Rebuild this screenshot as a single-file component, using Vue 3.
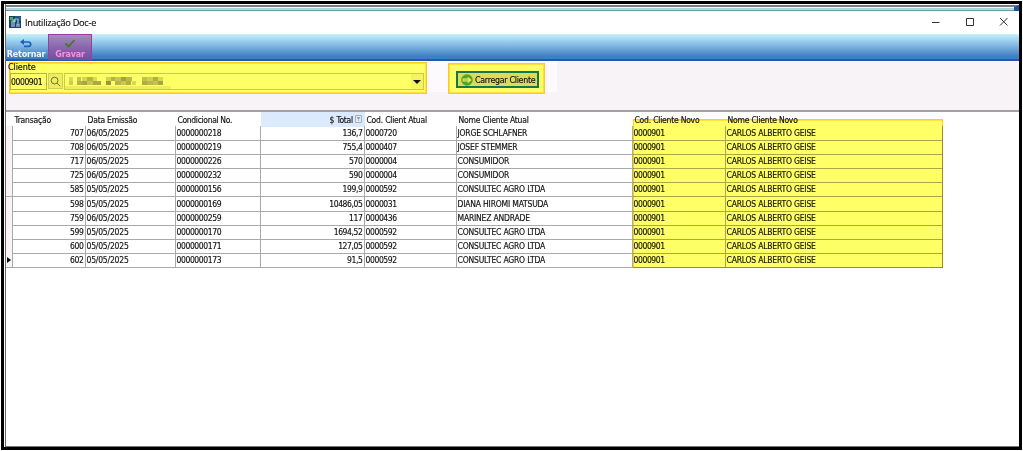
<template>
  <div class="frame">
    <div class="window">
      <div class="backdrop"></div>
      <header class="titlebar">
        <svg class="app-icon" viewBox="0 0 12 12">
          <rect width="12" height="12" fill="#173f69" />
          <path d="M1 4V1h3v2h2v3H4V4z" fill="#39b54a" />
          <path d="M3 11V5h2v6M6 6V3h3v4M8 11V8h2v3" fill="none" stroke="#a9cce0" stroke-width="1.2" />
          <path d="M6 1h5v4" fill="none" stroke="#2777a8" />
        </svg>
        <span class="title">Inutilização Doc-e</span>
        <svg class="controls" viewBox="0 0 78 10">
          <path d="M2 5.5h7.5M36.5 1.5h7v7h-7zM70 1l7.5 7.5M77.5 1L70 8.5" />
        </svg>
      </header>

      <nav class="toolbar">
        <button class="tool">
          <svg viewBox="0 0 12 9">
            <path d="M2 3h6.5a2.2 2.2 0 0 1 0 4.4H4" fill="none" stroke="#1763bd" stroke-width="1.7" />
            <path d="M0 3L4 0v6z" fill="#1763bd" />
          </svg>
          <span>Retornar</span>
        </button>
        <button class="tool tool--active">
          <svg viewBox="0 0 12 9">
            <path d="M1.5 4.5l3 3L10.5 1" fill="none" stroke="#3f7d22" stroke-width="1.8" />
          </svg>
          <span>Gravar</span>
        </button>
      </nav>

      <section class="filter">
        <div class="filter__light">
          <div class="client">
            <label class="client__label">Cliente</label>
            <div class="client__row">
              <span class="client__code">0000901</span>
              <button class="client__search">
                <svg viewBox="0 0 12 12">
                  <circle cx="5" cy="5" r="3.7" />
                  <path d="M7.8 7.8L11.2 11.2" />
                </svg>
              </button>
              <div class="client__name">
                <svg class="mosaic" viewBox="0 0 106 14">
                  <rect y="11" width="106" height="3" fill="#eded5d" />
                  <rect
                    v-for="(b, i) in blocks"
                    :key="i"
                    :x="b[0]"
                    :y="b[1]"
                    :width="b[2]"
                    height="4"
                    :fill="b[3]"
                  />
                </svg>
                <span class="client__drop"><i></i></span>
              </div>
            </div>
          </div>
          <div class="load">
            <button class="load__button">
              <svg viewBox="0 0 12 12">
                <circle cx="6" cy="6" r="5.8" fill="#55a51c" />
                <path d="M1.7 4.6h5V2.7L10.6 6 6.7 9.3V7.4h-5z" fill="#e5ed72" />
                <path d="M2.5 6h5" stroke="#8fbf3c" />
              </svg>
              <span>Carregar Cliente</span>
            </button>
          </div>
        </div>
      </section>

      <main class="grid">
        <div class="row row--head">
          <div class="cell cell--mark"></div>
          <div v-for="c in columns" :key="c.key" :class="['cell', `cell--${c.key}`]">
            <span>{{ c.label }}</span>
            <svg v-if="c.key === 'total'" class="funnel" viewBox="0 0 7 8">
              <path d="M.5.5h6v7h-6z" fill="#e8eef5" stroke="#a4afbc" />
              <path d="M2 2.5h3L3.5 4z M3.5 3.5V6" fill="#8390a0" stroke="#8390a0" stroke-width=".6" />
            </svg>
          </div>
        </div>
        <div v-for="(r, i) in rows" :key="r[0]" class="row">
          <div class="cell cell--mark"><i v-if="i === rows.length - 1"></i></div>
          <div v-for="(c, j) in columns" :key="c.key" :class="['cell', `cell--${c.key}`]">
            <span>{{ r[j] }}</span>
          </div>
        </div>
        <div class="highlight"></div>
      </main>
    </div>
  </div>
</template>

<script setup>
const columns = [
  { key: 'trans', label: 'Transação' },
  { key: 'date', label: 'Data Emissão' },
  { key: 'cond', label: 'Condicional No.' },
  { key: 'total', label: '$ Total' },
  { key: 'code', label: 'Cod. Client Atual' },
  { key: 'name', label: 'Nome Cliente Atual' },
  { key: 'newcode', label: 'Cod. Cliente Novo' },
  { key: 'newname', label: 'Nome Cliente Novo' }
];

const rows = [
  ['707', '06/05/2025', '0000000218', '136,7', '0000720', 'JORGE SCHLAFNER'],
  ['708', '06/05/2025', '0000000219', '755,4', '0000407', 'JOSEF STEMMER'],
  ['717', '06/05/2025', '0000000226', '570', '0000004', 'CONSUMIDOR'],
  ['725', '06/05/2025', '0000000232', '590', '0000004', 'CONSUMIDOR'],
  ['585', '05/05/2025', '0000000156', '199,9', '0000592', 'CONSULTEC AGRO LTDA'],
  ['598', '05/05/2025', '0000000169', '10486,05', '0000031', 'DIANA HIROMI MATSUDA'],
  ['759', '06/05/2025', '0000000259', '117', '0000436', 'MARINEZ ANDRADE'],
  ['599', '05/05/2025', '0000000170', '1694,52', '0000592', 'CONSULTEC AGRO LTDA'],
  ['600', '05/05/2025', '0000000171', '127,05', '0000592', 'CONSULTEC AGRO LTDA'],
  ['602', '05/05/2025', '0000000173', '91,5', '0000592', 'CONSULTEC AGRO LTDA']
].map((r) => [...r, '0000901', 'CARLOS ALBERTO GEISE']);

// censored client name: x, y, width, colour
const blocks = [
  [4, 2, 4, '#d9d955'], [4, 6, 4, '#cccc50'], [12, 2, 4, '#c5c54e'], [12, 6, 5, '#b3b347'],
  [17, 2, 5, '#d6d654'], [17, 6, 5, '#a6a642'], [22, 2, 6, '#b6b648'], [22, 6, 6, '#c8c84f'],
  [28, 2, 4, '#dada56'], [28, 6, 8, '#a9a943'], [41, 2, 5, '#d2d253'], [41, 6, 5, '#98983d'],
  [46, 2, 4, '#b3b347'], [50, 2, 6, '#c7c74e'], [50, 6, 6, '#b5b548'], [56, 2, 5, '#a2a240'],
  [56, 6, 5, '#c7c74e'], [61, 2, 6, '#bbbb4a'], [61, 6, 5, '#aeae45'], [67, 6, 4, '#d8d855'],
  [77, 2, 5, '#c0c04c'], [77, 6, 5, '#adad45'], [82, 2, 6, '#cfcf52'], [82, 6, 6, '#b8b849'],
  [88, 2, 5, '#b0b046'], [88, 6, 5, '#c3c34d'], [93, 2, 5, '#d8d855'], [93, 6, 5, '#a5a541']
];
</script>

<style>
body {
  margin: 0;
  background: #fff;
}
</style>

<style scoped>
.frame {
  box-sizing: border-box;
  width: 1023px;
  height: 451px;
  padding: 1px;
  font-family: "DejaVu Sans Condensed", "DejaVu Sans", sans-serif;
  font-stretch: condensed;
  font-size: 8.5px;
  letter-spacing: -0.4px;
  color: #111;
  -webkit-text-stroke: 0.15px currentColor;
  background: #fff;
}

.window {
  box-sizing: border-box;
  width: 1021px;
  height: 449px;
  border: 3px solid #000;
  box-shadow: inset 1px 0 #fff, inset 2px 0 #666, inset 0 -1px #777;
  padding: 1px 0 0 2px;
}

button {
  font: inherit;
  letter-spacing: inherit;
  color: inherit;
  border: 0;
  padding: 0;
  margin: 0;
  background: none;
}

svg {
  display: block;
  flex: none;
}

.backdrop {
  box-sizing: border-box;
  height: 6px;
  border-top: 2px solid #7d7c76;
  background: linear-gradient(#f2fbfc 25%, #a6cbd5 25%, #c2e1e8 75%, #6695a3 75%);
  border-right: 5px solid #1d559f;
}

.titlebar {
  display: flex;
  align-items: center;
  height: 23px;
  padding: 0 11px 0 3px;
  background: #fff;
  font-family: "Open Sans", "Noto Sans", sans-serif;
  font-stretch: normal;
  font-size: 9.2px;
  letter-spacing: -0.25px;
}

.app-icon {
  width: 12px;
  height: 12px;
  margin: -1px 4px 0 0;
}

.title {
  flex: 1;
  margin-top: -1px;
}

.controls {
  width: 78px;
  height: 10px;
  margin-top: -1px;
  fill: none;
  stroke: #333;
}

.toolbar {
  display: flex;
  box-sizing: border-box;
  height: 27px;
  background: linear-gradient(#c3f3fd, #84b9e3 45%, #3d7fc2 90%);
  border-bottom: 2px solid #2259a8;
}

.tool {
  display: flex;
  flex-direction: column;
  align-items: center;
  box-sizing: border-box;
  width: 42px;
  height: 27px;
  padding: 5px 2px 0 0;
  font-family: "DejaVu Sans", sans-serif;
  font-stretch: normal;
  font-size: 8px;
  line-height: 13px;
  font-weight: bold;
  letter-spacing: -0.2px;
  color: #f4f8fd;
  -webkit-text-stroke: 0;
}

.tool svg {
  width: 12px;
  height: 9px;
}

.tool--active {
  width: 44px;
  height: 26px;
  padding: 4px 0 0;
  color: #ff8fdc;
  border: 1px solid #9a3d9b;
  background: linear-gradient(#a48cc0, #8a66ae 50%, #7350a2);
}

.filter {
  box-sizing: border-box;
  height: 51px;
  background: #f7f3f7;
  border-bottom: 2px solid #a3a1a5;
}

.filter__light {
  display: flex;
  align-items: flex-start;
  width: 551px;
  height: 31px;
  background: #fdfafd;
}

.client {
  box-sizing: border-box;
  width: 418px;
  height: 32px;
  margin: 1px 0 0 3px;
  border: 1px solid #ffcb1b;
  box-shadow: inset 0 0 0 1px #ffe23b;
  background: #ffff66;
}

.client__label {
  display: block;
  height: 10px;
  margin-left: -2px;
  font-size: 9px;
  line-height: 8px;
  letter-spacing: -0.1px;
}

.client__row {
  display: flex;
  height: 17px;
}

.client__code {
  box-sizing: border-box;
  width: 37px;
  border: 1px solid #b5b54a;
  line-height: 16px;
}

.client__search {
  display: flex;
  align-items: center;
  justify-content: center;
  width: 15px;
  margin: 0 1px 1px;
  background: #eded60;
  box-shadow: inset 0 0 0 1px #cfcf53;
}

.client__search svg {
  width: 11px;
  height: 11px;
  fill: none;
  stroke: #67672d;
}

.client__name {
  display: flex;
  justify-content: space-between;
  box-sizing: border-box;
  flex: 1;
  margin-right: 2px;
  border: 1px solid #caca51;
}

.mosaic {
  width: 106px;
  height: 14px;
  margin-top: 1px;
}

.client__drop {
  width: 12px;
  padding-top: 6px;
  background: #f4f460;
}

.client__drop i {
  display: block;
  width: 0;
  margin-left: 2px;
  border: 4px solid transparent;
  border-top: 4px solid #111;
  border-bottom: 0;
}

.load {
  box-sizing: border-box;
  width: 97px;
  height: 31px;
  margin: 2px 0 0 21px;
  padding: 7px 5px 0 7px;
  border: 1px solid #ffc928;
  box-shadow: inset 0 0 0 1px #ffe039;
  background: #ffff66;
}

.load__button {
  display: flex;
  align-items: center;
  box-sizing: border-box;
  width: 83px;
  height: 17px;
  padding-left: 3px;
  border: 2px solid #157750;
  background: #dddc58;
  font-size: 8.8px;
  letter-spacing: -0.28px;
  white-space: nowrap;
}

.load__button svg {
  width: 12px;
  height: 12px;
  margin-right: 2px;
}

.grid {
  position: relative;
  width: 937px;
}

.row {
  display: grid;
  grid-template-columns: 7px 73px 90px 85px 104px 92px 176px 93px 217px;
  grid-template-rows: 15px;
  height: 14.12px;
}

.cell {
  box-sizing: border-box;
  min-width: 0;
  padding-left: 0.5px;
  line-height: 15px;
  white-space: nowrap;
  border-right: 1px solid #a9a9a9;
  border-bottom: 1px solid #a9a9a9;
}

.cell--mark {
  padding: 4px 0 0 1px;
  background: #f7f3f7;
}

.cell--mark i {
  display: block;
  width: 0;
  border: 3px solid transparent;
  border-left: 4px solid #000;
  border-right: 0;
}

.cell--trans,
.cell--total {
  text-align: right;
  padding-right: 1.5px;
}

.cell--date,
.cell--name,
.cell--newname {
  letter-spacing: -0.2px;
}

.row--head {
  height: 14px;
}

.row--head .cell {
  padding-left: 1.5px;
  line-height: 16px;
  border-color: transparent;
  letter-spacing: -0.22px;
}

.row--head .cell--cond {
  letter-spacing: -0.34px;
}

.row--head .cell--mark {
  background: #fff;
}

.row--head .cell--trans {
  text-align: left;
}

.row--head .cell--total {
  display: flex;
  justify-content: flex-end;
  background: #dbeafc;
  padding-right: 2px;
}

.funnel {
  width: 7px;
  height: 8px;
  margin: 3px 0 0 2px;
}

.highlight {
  position: absolute;
  box-sizing: border-box;
  left: 627px;
  top: 7px;
  width: 310px;
  height: 149px;
  border: 1px solid #ffcc26;
  box-shadow: inset 0 1px #ffe23f;
  background: #ffff66;
  mix-blend-mode: multiply;
}
</style>
